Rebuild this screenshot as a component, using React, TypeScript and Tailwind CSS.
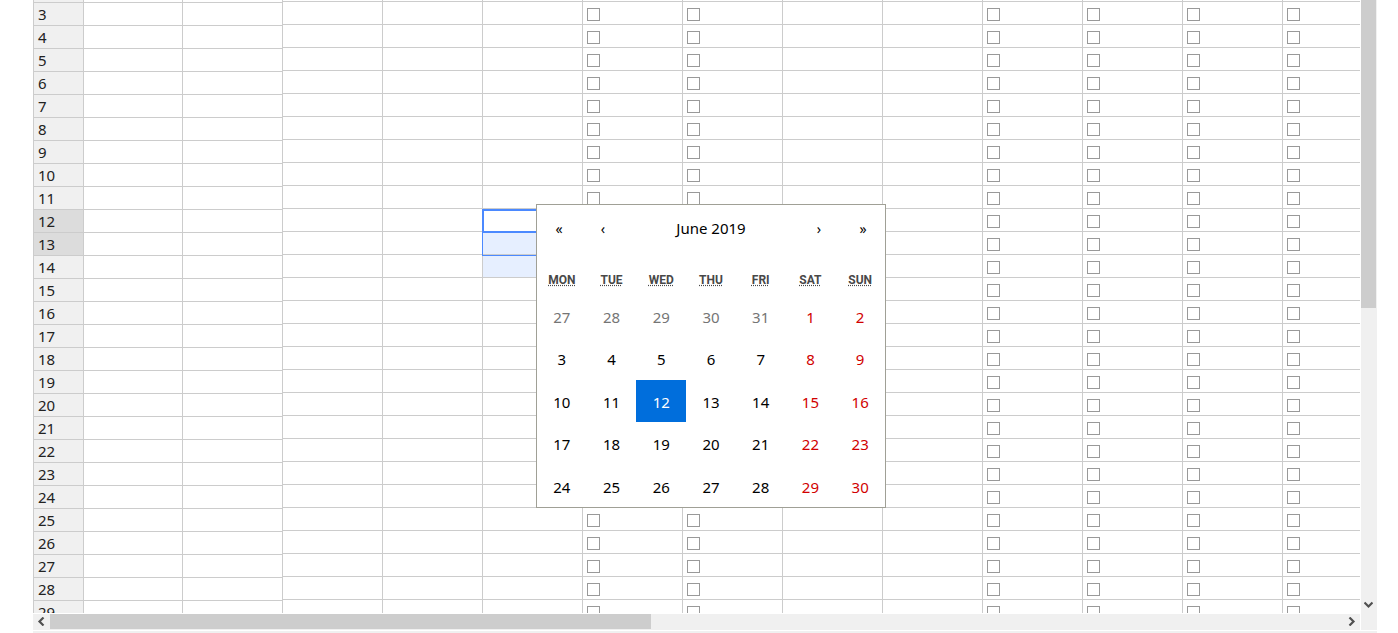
import React, { useState } from "react";
import { clsx } from "clsx";

const ROWS = Array.from({ length: 27 }, (_, i) => i + 3);

const COLUMNS = [
  { name: "D", checkbox: false },
  { name: "E", checkbox: false },
  { name: "F", checkbox: false },
  { name: "G", checkbox: true },
  { name: "H", checkbox: true },
  { name: "I", checkbox: false },
  { name: "J", checkbox: false },
  { name: "K", checkbox: true },
  { name: "L", checkbox: true },
  { name: "M", checkbox: true },
  { name: "N", checkbox: true },
];

const WEEKDAYS = [
  ["Mon", "Monday"],
  ["Tue", "Tuesday"],
  ["Wed", "Wednesday"],
  ["Thu", "Thursday"],
  ["Fri", "Friday"],
  ["Sat", "Saturday"],
  ["Sun", "Sunday"],
];

const DAYS = Array.from({ length: 35 }, (_, i) => ({
  day: i < 5 ? 27 + i : i - 4,
  outside: i < 5,
  weekend: i % 7 > 4,
}));

function FrozenColumns() {
  return (
    <table className="w-[250px] shrink-0 table-fixed border-separate border-spacing-0 border-l border-[#ccc]">
      <colgroup>
        <col className="w-[50px]" />
        <col className="w-[99px]" />
        <col className="w-[100px]" />
      </colgroup>
      <tbody>
        <tr className="h-[3px]">
          <td className="border-r border-b border-[#ccc] bg-[#f0f0f0] p-0" />
          <td className="border-r border-b border-[#ccc] p-0" />
          <td className="border-r border-b border-[#ccc] p-0" />
        </tr>
        {ROWS.map((row) => (
          <tr key={row} className="h-[23px]">
            <th
              scope="row"
              className={clsx(
                "border-r border-b border-[#ccc] py-0 pr-0 pl-1 text-left text-[15px] leading-[22px] font-normal text-[#222]",
                row === 12 || row === 13 ? "bg-[#dcdcdc]" : "bg-[#f0f0f0]",
              )}
            >
              {row}
            </th>
            <td className="border-r border-b border-[#ccc] p-0" />
            <td className="border-r border-b border-[#ccc] p-0" />
          </tr>
        ))}
      </tbody>
    </table>
  );
}

function GridCell({ row, name, checkbox }: { row: number; name: string; checkbox: boolean }) {
  const current = name === "F" && row === 12;
  const filled = name === "F" && (row === 13 || row === 14);
  return (
    <td
      className={clsx(
        "border-r border-b border-[#ccc] p-0 align-top",
        filled && "bg-[#e6efff]",
        current && "relative",
      )}
    >
      {checkbox && (
        <input
          type="checkbox"
          aria-label={`${name}${row}`}
          className="mt-1.5 ml-1 block size-[13px] appearance-none border border-[#999] bg-white checked:bg-[#4b89ff]"
        />
      )}
      {current && (
        <>
          <span className="absolute top-0 -left-px h-[47px] w-[101px] border border-[#4b89ff]" />
          <span className="absolute top-0 -left-px h-6 w-[101px] border-2 border-[#4b89ff]" />
        </>
      )}
    </td>
  );
}

function ScrollingColumns() {
  return (
    <div className="min-w-0 flex-1 overflow-hidden">
      <table className="w-[1100px] table-fixed border-separate border-spacing-0">
        <colgroup>
          {COLUMNS.map((c) => (
            <col key={c.name} className="w-[100px]" />
          ))}
        </colgroup>
        <tbody>
          <tr className="h-[2px]">
            {COLUMNS.map((c) => (
              <td key={c.name} className="border-r border-b border-[#ccc] p-0" />
            ))}
          </tr>
          {ROWS.map((row) => (
            <tr key={row} className="h-[23px]">
              {COLUMNS.map((c) => (
                <GridCell key={c.name} row={row} name={c.name} checkbox={c.checkbox} />
              ))}
            </tr>
          ))}
        </tbody>
      </table>
    </div>
  );
}

function Arrow({ d, label, className }: { d: string; label: string; className: string }) {
  return (
    <button type="button" aria-label={label} className={clsx("flex shrink-0 items-center justify-center", className)}>
      <svg viewBox="0 0 9 9" className="size-[9px]" fill="none" stroke="#505050" strokeWidth="2.2">
        <path d={d} />
      </svg>
    </button>
  );
}

function Calendar() {
  const [picked, setPicked] = useState(12);
  const nav = "w-11 shrink-0 pt-1 text-sm";
  return (
    <div
      role="dialog"
      aria-label="Choose a date"
      className="absolute top-[204px] left-[536px] flex h-[304px] w-[350px] flex-col border border-[#a0a096] bg-white text-[15px] text-black"
    >
      <div className="mb-4 flex h-11 shrink-0">
        <button type="button" aria-label="Previous year" className={nav}>«</button>
        <button type="button" aria-label="Previous month" className={nav}>‹</button>
        <button type="button" className="flex-1 pt-0.5">June 2019</button>
        <button type="button" aria-label="Next month" className={nav}>›</button>
        <button type="button" aria-label="Next year" className={nav}>»</button>
      </div>
      <div className="grid h-[30px] shrink-0 grid-cols-7 items-center text-center font-[Roboto] text-xs font-bold text-[#484848] uppercase">
        {WEEKDAYS.map(([short, full]) => (
          <div key={short}>
            <abbr title={full} className="underline decoration-dotted">{short}</abbr>
          </div>
        ))}
      </div>
      <div className="grid flex-1 grid-cols-7 grid-rows-5">
        {DAYS.map(({ day, outside, weekend }) => (
          <button
            key={`${outside}-${day}`}
            type="button"
            onClick={() => !outside && setPicked(day)}
            className={clsx(
              "pt-0.5",
              !outside && day === picked
                ? "bg-[#006edc] text-white"
                : outside
                  ? "text-[#757575]"
                  : weekend
                    ? "text-[#d10000]"
                    : "text-black",
            )}
          >
            {day}
          </button>
        ))}
      </div>
    </div>
  );
}

export default function App() {
  return (
    <main className="relative flex h-screen flex-col gap-px overflow-hidden bg-white pr-[21px] pl-[33px] font-['Noto_Sans',sans-serif]">
      <div className="flex min-h-0 flex-1 gap-px">
        <div className="flex min-w-0 flex-1 flex-col gap-px">
          <div className="flex min-h-0 flex-1 items-start overflow-hidden">
            <FrozenColumns />
            <ScrollingColumns />
          </div>
          <div className="flex h-4 shrink-0 bg-[#f0f0f0]">
            <Arrow label="Scroll left" d="M6.5 .5 2.5 4.5 6.5 8.5" className="h-[15px] w-[17px]" />
            <div className="flex-1">
              <div className="h-[15px] w-[46.5%] bg-[#cdcdcd]" />
            </div>
            <Arrow label="Scroll right" d="M2.5 .5 6.5 4.5 2.5 8.5" className="h-[15px] w-[17px]" />
          </div>
        </div>
        <div className="flex w-4 shrink-0 flex-col bg-[#f0f0f0] pb-[17px]">
          <div className="flex-1">
            <div className="h-[308px] w-[15px] bg-[#cdcdcd]" />
          </div>
          <Arrow label="Scroll down" d="M.5 2.5 4.5 6.5 8.5 2.5" className="h-[17px] w-[15px]" />
        </div>
      </div>
      <div className="h-[2px] shrink-0 bg-[#f0f0f0]" />
      <Calendar />
    </main>
  );
}
